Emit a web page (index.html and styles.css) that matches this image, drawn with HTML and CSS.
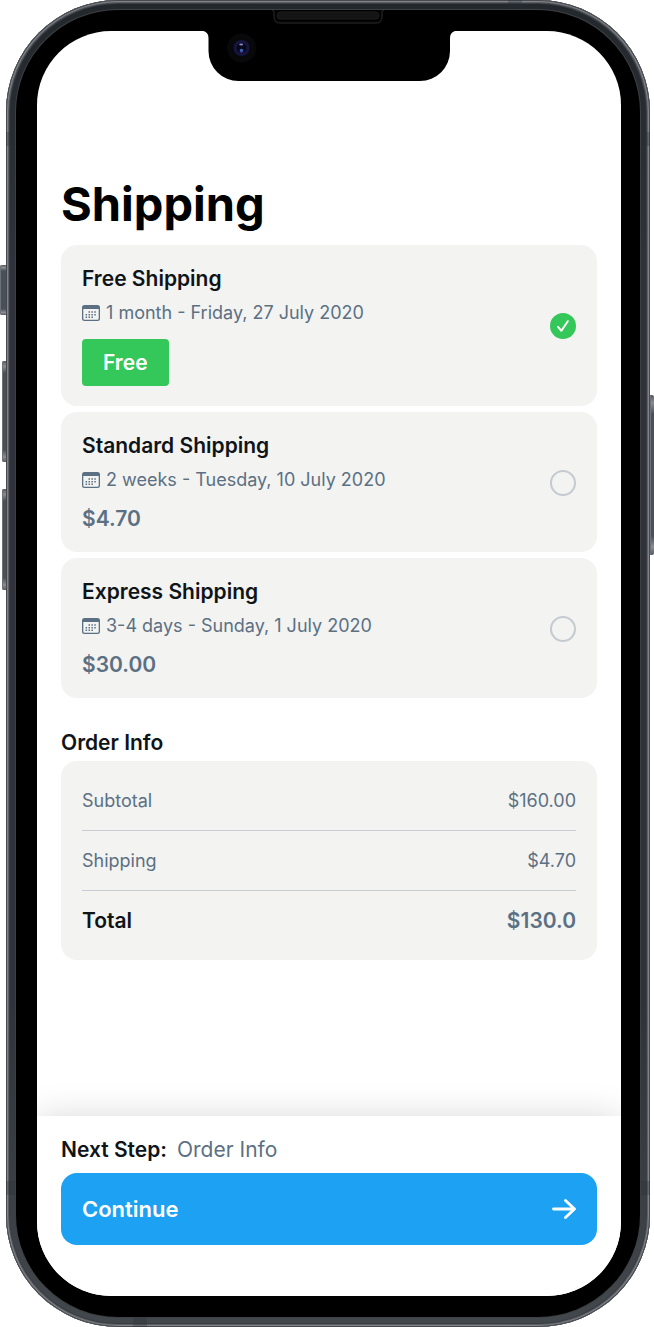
FILE: index.html
```html
<!DOCTYPE html>
<html lang="en">
<head>
<meta charset="utf-8">
<meta name="viewport" content="width=device-width, initial-scale=1">
<title>Shipping</title>
<link rel="stylesheet" href="styles.css">
</head>
<body>
<svg class="sprite" aria-hidden="true">
  <symbol id="calendar" viewBox="0 0 18 16">
    <path d="M2.500 0h13a2.500 2.500 0 0 1 2.500 2.500v11a2.500 2.500 0 0 1-2.500 2.500h-13A2.500 2.500 0 0 1 0 13.500v-11A2.500 2.500 0 0 1 2.500 0zM1.300 4V13.400A1.300 1.300 0 0 0 2.600 14.700h12.800a1.300 1.300 0 0 0 1.300-1.300V4z" fill="currentColor" fill-rule="evenodd"/>
    <path d="M6.500 7h8M3.600 9.700h11M3.600 12.300h8" stroke="currentColor" stroke-width="1.400" stroke-dasharray="1.500 1.400" fill="none"/>
  </symbol>
  <symbol id="check" viewBox="0 0 26 26">
    <path d="M8 13.800l3.400 4L17.800 8.200" fill="none" stroke="#fff" stroke-width="2" stroke-linecap="round" stroke-linejoin="round"/>
  </symbol>
</svg>
<div class="phone">
  <span class="key key-silent"></span>
  <span class="key key-up"></span>
  <span class="key key-down"></span>
  <span class="key key-power"></span>
  <span class="band band-top"></span>
  <span class="band band-bottom"></span>
  <span class="band band-sides band-upper"></span>
  <span class="band band-sides band-lower"></span>
  <div class="bezel">
    <svg class="notch" width="260" height="72" viewBox="0 0 260 72" aria-hidden="true">
      <path d="M0 20.500H2Q9.500 21 9.500 28V41A30 30 0 0 0 39.500 71H221A30 30 0 0 0 251 41V28Q251 21 258.500 20.500H260V18H0z" fill="#000"/>
      <circle cx="42.500" cy="38" r="14.500" fill="#08080a"/>
      <circle cx="42.500" cy="38" r="8" fill="#15153f"/>
      <circle cx="42.500" cy="38" r="5" fill="#080818"/>
      <ellipse cx="42.200" cy="34.400" rx="2" ry="1" fill="#8d88c4"/>
      <circle cx="42.500" cy="40.500" r="1.800" fill="#3c63b5"/>
      <circle cx="42.500" cy="42" r="1" fill="#5a28a0"/>
      <path d="M73 0q2 0 2 2v5q0 6 6 6h96q6 0 6-6V2q0-2 2-2" fill="#030303" stroke="#2c2c2c" stroke-width="1"/>
      <rect x="78" y="2" width="102" height="7" rx="3.500" fill="#141414" stroke="#1c1c1c"/>
    </svg>
    <div class="screen">
      <main class="content">
        <h1>Shipping</h1>
        <form class="options">
          <label class="card option">
            <span class="details">
              <span class="name">Free Shipping</span>
              <span class="date"><svg class="calendar" aria-hidden="true"><use href="#calendar"/></svg>1 month - Friday, 27 July 2020</span>
              <span class="badge">Free</span>
            </span>
            <span class="choice"><input type="radio" name="shipping" value="free" checked><svg class="check" aria-hidden="true"><use href="#check"/></svg></span>
          </label>
          <label class="card option">
            <span class="details">
              <span class="name">Standard Shipping</span>
              <span class="date"><svg class="calendar" aria-hidden="true"><use href="#calendar"/></svg>2 weeks - Tuesday, 10 July 2020</span>
              <span class="price">$4.70</span>
            </span>
            <span class="choice"><input type="radio" name="shipping" value="standard"><svg class="check" aria-hidden="true"><use href="#check"/></svg></span>
          </label>
          <label class="card option">
            <span class="details">
              <span class="name">Express Shipping</span>
              <span class="date"><svg class="calendar" aria-hidden="true"><use href="#calendar"/></svg>3-4 days - Sunday, 1 July 2020</span>
              <span class="price">$30.00</span>
            </span>
            <span class="choice"><input type="radio" name="shipping" value="express"><svg class="check" aria-hidden="true"><use href="#check"/></svg></span>
          </label>
        </form>
        <h2>Order Info</h2>
        <div class="card summary">
          <table>
            <tbody>
              <tr><th scope="row">Subtotal</th><td>$160.00</td></tr>
              <tr><th scope="row">Shipping</th><td>$4.70</td></tr>
              <tr class="total"><th scope="row">Total</th><td>$130.0</td></tr>
            </tbody>
          </table>
        </div>
      </main>
      <footer class="footer">
        <p class="next"><strong>Next Step:</strong><span>Order Info</span></p>
        <button class="continue" type="button">Continue
          <svg width="24" height="20" viewBox="0 0 24 20" aria-hidden="true"><path d="M1.500 10h21M13.500 1.500L22.500 10l-9 8.500" fill="none" stroke="#fff" stroke-width="2.800" stroke-linecap="round" stroke-linejoin="round"/></svg>
        </button>
      </footer>
    </div>
  </div>
</div>
</body>
</html>
```
FILE: styles.css
```css
* {
  box-sizing: border-box;
}

body {
  margin: 0;
  background: #fff;
  color: #0f1419;
  font-family: Inter, "Liberation Sans", sans-serif;
  font-size: 18px;
  line-height: 24px;
}

.sprite {
  position: absolute;
  width: 0;
  height: 0;
}

/* Device shell */
.phone {
  position: relative;
  display: flex;
  min-height: 100vh;
  margin: 0 4px 0 6px;
  padding: 10px;
  border-radius: 112px;
  background: linear-gradient(#23282d, #2f323a 20%, #2f323a 75%, #43484d);
  box-shadow: inset 0 0 0 1px #45484d, inset 0 0 0 2px #808488, inset 0 0 0 3px #5b5f64, inset 0 0 0 4px #3a3e44;
}

.bezel {
  position: relative;
  display: flex;
  flex: 1;
  padding: 21px 19px 21px 21px;
  border-radius: 102px;
  background: #000;
  box-shadow: 0 0 0 1px #3d4043;
}

.key {
  position: absolute;
  background: linear-gradient(#55595e, #8a8e92 5%, #4a5058 12%, #4a5058 88%, #8a8e92 95%, #55595e);
  box-shadow: inset 1px 0 #6d7278;
}

.key-silent { top: 265px; left: -6px; width: 6px; height: 50px; border-radius: 2px 0 0 2px; }
.key-up { top: 361px; left: -4px; width: 4px; height: 101px; border-radius: 2px 0 0 2px; }
.key-down { top: 489px; left: -4px; width: 4px; height: 101px; border-radius: 2px 0 0 2px; }
.key-power { top: 395px; right: -4px; width: 4px; height: 160px; border-radius: 0 2px 2px 0; }

.band {
  position: absolute;
  background: rgba(40, 46, 52, 0.3);
}

.band-top { top: 0; right: 128px; width: 14px; height: 9px; }
.band-bottom { bottom: 0; left: 127px; width: 14px; height: 9px; }
.band-sides { left: 0; right: 0; height: 14px; }
.band-upper { top: 132px; }
.band-lower { bottom: 132px; }

.notch {
  position: absolute;
  top: 0;
  left: 21px;
  right: 19px;
  z-index: 1;
  margin: 0 auto;
}

.screen {
  display: flex;
  flex: 1;
  flex-direction: column;
  overflow: hidden;
  border-radius: 74px;
  background: #fff;
}

/* Page content */
.content {
  padding: 144px 24px 32px;
}

h1 {
  margin: 0 0 12px;
  color: #000;
  font-size: 47px;
  font-weight: 700;
  line-height: 58px;
}

h2 {
  margin: 32px 0 5px;
  font-size: 21px;
  font-weight: 600;
  line-height: 26px;
}

.card {
  border-radius: 16px;
  background: #f3f3f1;
}

.options {
  display: flex;
  flex-direction: column;
  gap: 6px;
}

.option {
  display: flex;
  align-items: center;
  justify-content: space-between;
  padding: 21px 21px 20px;
}

.details {
  display: flex;
  flex-direction: column;
  align-items: flex-start;
}

.name {
  font-size: 21px;
  font-weight: 600;
  line-height: 26px;
}

.date {
  display: flex;
  align-items: center;
  gap: 6px;
  margin: 9px 0 14px;
  color: #5b7083;
}

.calendar {
  width: 18px;
  height: 16px;
}

.price {
  color: #5b7083;
  font-size: 21px;
  font-weight: 600;
  line-height: 26px;
}

.badge {
  padding: 0 21px;
  border-radius: 4px;
  background: #34c759;
  color: #fff;
  font-size: 21px;
  font-weight: 600;
  line-height: 47px;
}

.choice {
  display: grid;
}

.choice input,
.check {
  grid-area: 1 / 1;
  width: 26px;
  height: 26px;
  margin: 0;
}

.choice input {
  appearance: none;
  border: 2px solid #c4cad0;
  border-radius: 50%;
}

.choice input:checked {
  border-color: #34c759;
  background: #34c759;
}

.check {
  visibility: hidden;
  pointer-events: none;
}

input:checked + .check {
  visibility: visible;
}

.summary {
  padding: 10px 21px 9px;
}

table {
  width: 100%;
  border-collapse: separate;
  border-spacing: 0;
  color: #5b7083;
}

th,
td {
  height: 60px;
  padding: 0;
  border-bottom: 1px solid #c9ccd3;
  font-weight: 400;
  text-align: left;
}

td {
  text-align: right;
}

.total th,
.total td {
  border-bottom: 0;
  font-size: 21px;
  font-weight: 600;
}

.total th {
  color: #0f1419;
}

/* Bottom bar */
.footer {
  margin-top: auto;
  padding: 21px 24px 51px;
  background: #fff;
  box-shadow: 0 0 32px rgba(0, 0, 0, 0.15);
}

.next {
  display: flex;
  gap: 10px;
  margin: 0 0 10px;
  color: #5b7083;
  font-size: 21px;
  line-height: 26px;
}

.next strong {
  color: #0f1419;
  font-weight: 600;
}

.continue {
  display: flex;
  align-items: center;
  justify-content: space-between;
  width: 100%;
  height: 72px;
  padding: 0 21px;
  border: 0;
  border-radius: 16px;
  background: #1da1f2;
  color: #fff;
  font: inherit;
  font-size: 22px;
  font-weight: 600;
}
```
